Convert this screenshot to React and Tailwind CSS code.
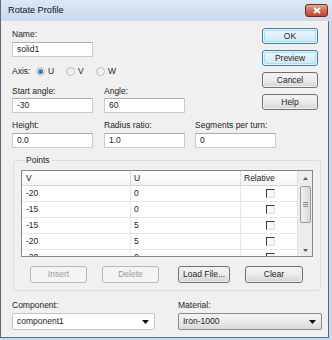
const font = { fontFamily: '"Liberation Sans", Arial, sans-serif' };

const Label = ({ children, className = "" }) => (
  <div className={"text-[8.5px] leading-[10px] text-[#1e1e1e] " + className}>{children}</div>
);

const TextBox = ({ value, className = "" }) => (
  <div
    className={
      "h-[15px] w-[81px] bg-white border border-[#c5ccd4] border-t-[#abadb3] flex items-center pl-[4px] text-[8.5px] text-[#1e1e1e] " +
      className
    }
  >
    {value}
  </div>
);

const Button = ({ children, primary, disabled, className = "" }) => {
  if (disabled) {
    return (
      <div
        className={
          "flex items-center justify-center rounded-[3px] border border-[#b4b9bd] bg-[#f4f4f4] text-[8.5px] text-[#9a9a9a] " +
          className
        }
      >
        {children}
      </div>
    );
  }
  return (
    <div
      className={
        "rounded-[3px] border p-px " +
        (primary ? "border-[#3c7fb1] " : "border-[#707070] ") +
        className
      }
    >
      <div
        className={
          "h-full w-full rounded-[2px] flex items-center justify-center text-[8.5px] text-[#1e1e1e] bg-gradient-to-b " +
          (primary
            ? "border border-[#9ee3f7] from-[#eaf6fb] to-[#d5e8f1]"
            : "from-[#f3f3f3] via-[#ebebeb] to-[#d6d6d6]")
        }
      >
        {children}
      </div>
    </div>
  );
};

const Radio = ({ label, checked }) => (
  <div className="flex items-center gap-[3px] w-[30px]">
    <div className="w-[9px] h-[9px] rounded-full border border-[#b8bec4] bg-gradient-to-br from-[#e6e6e6] to-[#fafafa] flex items-center justify-center">
      {checked && <div className="w-[5px] h-[5px] rounded-full bg-gradient-to-br from-[#4aa6e0] to-[#1c5f9a]" />}
    </div>
    <span className="text-[8.5px] text-[#1e1e1e]">{label}</span>
  </div>
);

const Check = () => (
  <div className="w-[9px] h-[9px] border-t border-l border-[#3a3a3a] border-r border-r-[#e0e0e0] border-b border-b-[#e0e0e0] bg-[#f7f7f7]" />
);

const rows = [
  ["-20", "0"],
  ["-15", "0"],
  ["-15", "5"],
  ["-20", "5"],
  ["-20", "0"],
];

const Combo = ({ value, white, className = "" }) => (
  <div
    className={
      "h-[17px] rounded-[2px] border flex items-center justify-between pl-[4px] pr-[5px] text-[8.5px] text-[#1e1e1e] " +
      (white
        ? "border-[#bfc5cc] bg-white "
        : "border-[#8a8a8a] bg-gradient-to-b from-[#f3f3f3] via-[#ebebeb] to-[#d9d9d9] ") +
      className
    }
  >
    <span>{value}</span>
    <svg width="7" height="4" viewBox="0 0 7 4">
      <polygon points="0,0 7,0 3.5,4" fill="#111" />
    </svg>
  </div>
);

export default function App() {
  return (
    <div style={font} className="w-[332px] h-[340px] bg-[#c6d8ec] flex flex-col">
      {/* title bar */}
      <div className="h-[21px] shrink-0 flex items-center justify-between pl-[7px] pr-[4px] bg-gradient-to-b from-[#dbe7f4] to-[#c8daee] border-l border-[#5b6b7c]">
        <span className="text-[9.2px] text-[#111]">Rotate Profile</span>
        <div className="w-[23px] h-[13px] rounded-[3px] border border-[#6b2a25] bg-gradient-to-b from-[#e8a493] via-[#d06b55] to-[#c0462f] flex items-center justify-center">
          <svg width="8" height="7" viewBox="0 0 8 7">
            <path d="M1 1 L7 6 M7 1 L1 6" stroke="#fff" strokeWidth="1.8" />
          </svg>
        </div>
      </div>

      {/* body */}
      <div className="flex-1 mr-[3px] mb-[2px] bg-[#f0f0f0] border-l border-r border-b border-[#5b6b7c] pl-[11px] flex flex-col">
        <div className="flex">
          <div className="flex flex-col w-[250px]">
            <Label className="mt-[8px]">Name:</Label>
            <TextBox value="solid1" className="mt-[3px]" />
            <div className="flex items-center h-[12px] mt-[8px]">
              <span className="text-[8.5px] text-[#1e1e1e] w-[24px]">Axis:</span>
              <Radio label="U" checked />
              <Radio label="V" />
              <Radio label="W" />
            </div>
            <div className="flex mt-[9px]">
              <div className="w-[92px]">
                <Label>Start angle:</Label>
                <TextBox value="-30" className="mt-[2px]" />
              </div>
              <div className="w-[91px]">
                <Label>Angle:</Label>
                <TextBox value="60" className="mt-[2px]" />
              </div>
            </div>
          </div>
          <div className="flex flex-col gap-[6px] mt-[7px]">
            <Button primary className="w-[56px] h-[16px]">OK</Button>
            <Button primary className="w-[56px] h-[16px]">Preview</Button>
            <Button className="w-[56px] h-[16px]">Cancel</Button>
            <Button className="w-[56px] h-[16px]">Help</Button>
          </div>
        </div>

        <div className="flex mt-[7px]">
          <div className="w-[92px]">
            <Label>Height:</Label>
            <TextBox value="0.0" className="mt-[3px]" />
          </div>
          <div className="w-[91px]">
            <Label>Radius ratio:</Label>
            <TextBox value="1.0" className="mt-[3px]" />
          </div>
          <div>
            <Label>Segments per turn:</Label>
            <TextBox value="0" className="mt-[3px]" />
          </div>
        </div>

        {/* Points group */}
        <fieldset className="mt-[7px] ml-px w-[308px] border border-[#d5dfe5] rounded-[3px] px-[7px] pb-[7px]">
          <legend className="ml-[4px] px-[1px] text-[8.5px] leading-[10px] text-[#1e1e1e]">Points</legend>
          <div className="mt-[5px] h-[87px] border border-[#828790] bg-white flex overflow-hidden">
            <div className="w-[275px] flex flex-col">
              <div className="h-[15px] shrink-0 flex border-b border-[#d5d5d5] bg-gradient-to-b from-white to-[#f3f4f6] text-[8.5px] text-[#1e1e1e]">
                <div className="w-[109px] pl-[4px] flex items-center border-r border-[#dcdcdc]">V</div>
                <div className="w-[110px] pl-[3px] flex items-center border-r border-[#dcdcdc]">U</div>
                <div className="flex-1 pl-[3px] flex items-center">Relative</div>
              </div>
              {rows.map((r, i) => (
                <div key={i} className="h-[16px] shrink-0 flex border-b border-[#e6e6e6] text-[8.5px] text-[#1e1e1e]">
                  <div className="w-[109px] pl-[4px] flex items-center border-r border-[#e6e6e6]">{r[0]}</div>
                  <div className="w-[110px] pl-[3px] flex items-center border-r border-[#e6e6e6]">{r[1]}</div>
                  <div className="flex-1 flex items-center justify-center pl-[2px]">
                    <Check />
                  </div>
                </div>
              ))}
            </div>
            {/* scrollbar */}
            <div className="flex-1 bg-[#ededed] border-l border-[#e2e2e2] flex flex-col items-center">
              <div className="h-[15px] flex items-center justify-center">
                <svg width="5" height="3" viewBox="0 0 5 3">
                  <polygon points="0,3 5,3 2.5,0" fill="#5a5a5a" />
                </svg>
              </div>
              <div className="w-[11px] h-[37px] rounded-[2px] border border-[#9a9a9a] bg-gradient-to-r from-[#f2f2f2] to-[#d8d8d8] flex flex-col items-center justify-center gap-[1px]">
                <div className="w-[5px] h-px bg-[#8a8a8a]" />
                <div className="w-[5px] h-px bg-[#8a8a8a]" />
                <div className="w-[5px] h-px bg-[#8a8a8a]" />
              </div>
              <div className="flex-1" />
              <div className="h-[12px] flex items-center justify-center">
                <svg width="5" height="3" viewBox="0 0 5 3">
                  <polygon points="0,0 5,0 2.5,3" fill="#5a5a5a" />
                </svg>
              </div>
            </div>
          </div>
          <div className="flex mt-[9px] h-[17px] pl-[9px]">
            <Button disabled className="w-[57px]">Insert</Button>
            <Button disabled className="w-[57px] ml-[15px]">Delete</Button>
            <Button className="w-[52px] ml-[19px]">Load File...</Button>
            <Button className="w-[58px] ml-[15px]">Clear</Button>
          </div>
        </fieldset>

        <div className="flex mt-[9px]">
          <div className="w-[166px]">
            <Label>Component:</Label>
            <Combo white value="component1" className="mt-[3px] w-[143px]" />
          </div>
          <div>
            <Label>Material:</Label>
            <Combo value="Iron-1000" className="mt-[3px] w-[144px]" />
          </div>
        </div>
      </div>
    </div>
  );
}
